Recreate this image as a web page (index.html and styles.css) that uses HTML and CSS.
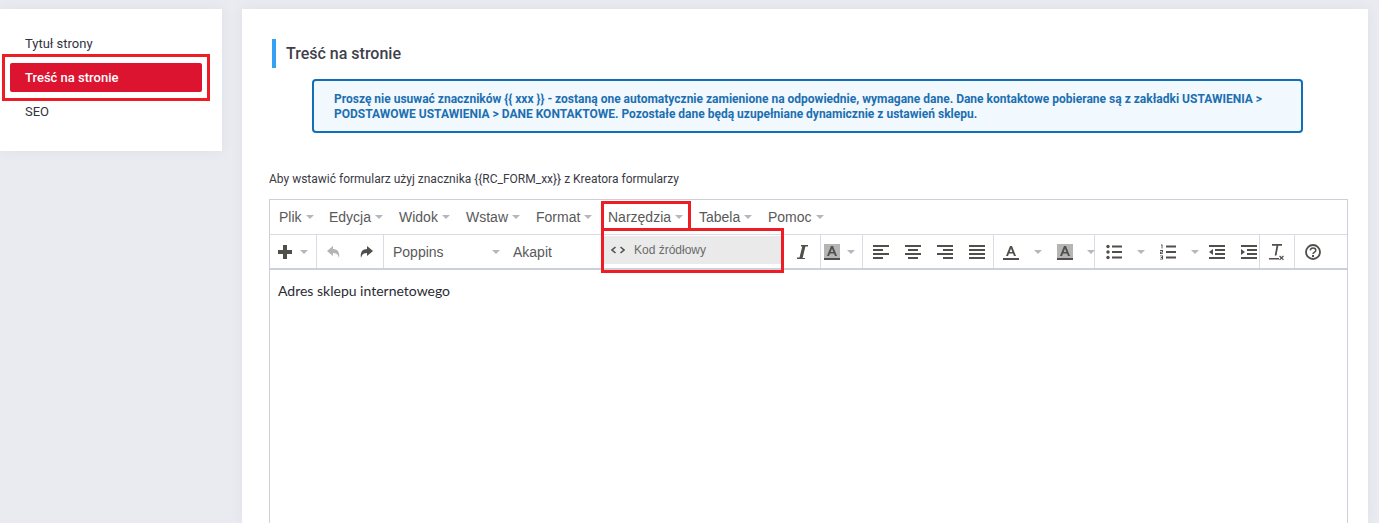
FILE: index.html
```html
<!DOCTYPE html>
<html lang="pl">
<head>
<meta charset="utf-8">
<title>Treść na stronie</title>
<link rel="stylesheet" href="styles.css">
</head>
<body>
<svg class="sprites" width="0" height="0" aria-hidden="true">
  <symbol id="i-caret" viewBox="0 0 10 5"><path d="M0 0h10L5 5z"/></symbol>
</svg>
<div class="page">
  <aside class="side">
    <nav class="side-nav">
      <a class="side-link">Tytuł strony</a>
      <a class="side-link active">Treść na stronie</a>
      <a class="side-link">SEO</a>
    </nav>
    <span class="mark mark-side"></span>
  </aside>
  <main class="panel">
    <h2 class="title">Treść na stronie</h2>
    <div class="alert">Proszę nie usuwać znaczników {{ xxx }} - zostaną one automatycznie zamienione na odpowiednie, wymagane dane. Dane kontaktowe pobierane są z zakładki USTAWIENIA &gt; PODSTAWOWE USTAWIENIA &gt; DANE KONTAKTOWE. Pozostałe dane będą uzupełniane dynamicznie z ustawień sklepu.</div>
    <p class="hint">Aby wstawić formularz użyj znacznika {{RC_FORM_xx}} z Kreatora formularzy</p>
    <div class="editor">
      <div class="menubar">
        <span class="menu m-plik">Plik<svg class="caret"><use href="#i-caret"/></svg></span>
        <span class="menu m-edycja">Edycja<svg class="caret"><use href="#i-caret"/></svg></span>
        <span class="menu m-widok">Widok<svg class="caret"><use href="#i-caret"/></svg></span>
        <span class="menu m-wstaw">Wstaw<svg class="caret"><use href="#i-caret"/></svg></span>
        <span class="menu m-format">Format<svg class="caret"><use href="#i-caret"/></svg></span>
        <span class="menu m-narz">Narzędzia<svg class="caret"><use href="#i-caret"/></svg></span>
        <span class="menu m-tabela">Tabela<svg class="caret"><use href="#i-caret"/></svg></span>
        <span class="menu">Pomoc<svg class="caret"><use href="#i-caret"/></svg></span>
      </div>
      <div class="toolbar">
        <div class="group g-insert">
          <span class="btn w-plus"><svg width="16" height="16" viewBox="0 0 16 16"><path class="ink" d="M6 1h4v5h5v4h-5v5H6v-5H1V6h5z"/></svg></span>
          <svg class="caret"><use href="#i-caret"/></svg>
        </div>
        <div class="group g-hist">
          <span class="btn"><svg width="16" height="16" viewBox="0 0 16 16"><path class="ink-off" d="M7 2 1 7l6 5V9c3 0 5 1 6 5 1-5-1-9-6-9z"/></svg></span>
          <span class="btn"><svg width="16" height="16" viewBox="0 0 16 16"><path class="ink" d="M9 2l6 5-6 5V9c-3 0-5 1-6 5-1-5 1-9 6-9z"/></svg></span>
        </div>
        <div class="group g-select">
          <span class="select s-font">Poppins<svg class="caret"><use href="#i-caret"/></svg></span>
          <span class="select s-block">Akapit</span>
        </div>
        <div class="group g-format">
          <span class="btn"><svg width="16" height="16" viewBox="0 0 16 16"><path class="ink" d="M7 1h7v1.6h-2.6L8.6 14H11v1H3v-1.600h2.500L8.300 2.600H7z"/></svg></span>
          <span class="btn w-tight"><svg width="16" height="16" viewBox="0 0 16 16"><path class="bar-bg" d="M0 0h16v14H0z"/><path class="ink" d="M0 14h16v2H0zM7 2h2l4 10h-2l-1-2.500H6L5 12H3zM6.700 8h2.600L8 4.500z"/></svg></span>
          <svg class="caret c-fmt"><use href="#i-caret"/></svg>
        </div>
        <div class="group g-align">
          <span class="btn"><svg width="16" height="14" viewBox="0 0 16 14"><path class="ink" d="M0 0h16v2H0zM0 4h10v2H0zM0 8h16v2H0zM0 12h10v2H0z"/></svg></span>
          <span class="btn"><svg width="16" height="14" viewBox="0 0 16 14"><path class="ink" d="M0 0h16v2H0zM3 4h10v2H3zM0 8h16v2H0zM3 12h10v2H3z"/></svg></span>
          <span class="btn"><svg width="16" height="14" viewBox="0 0 16 14"><path class="ink" d="M0 0h16v2H0zM6 4h10v2H6zM0 8h16v2H0zM6 12h10v2H6z"/></svg></span>
          <span class="btn"><svg width="16" height="14" viewBox="0 0 16 14"><path class="ink" d="M0 0h16v2H0zM0 4h16v2H0zM0 8h16v2H0zM0 12h16v2H0z"/></svg></span>
        </div>
        <div class="group g-color">
          <span class="btn w-color"><svg width="16" height="16" viewBox="0 0 16 16"><path class="ink" d="M0 14h16v2H0zM7 2h2l4 10h-2l-1-2.500H6L5 12H3zM6.700 8h2.600L8 4.500z"/></svg></span>
          <svg class="caret c-color1"><use href="#i-caret"/></svg>
          <span class="btn w-color2"><svg width="16" height="16" viewBox="0 0 16 16"><path class="bar-bg" d="M0 0h16v14H0z"/><path class="ink" d="M0 14h16v2H0zM7 2h2l4 10h-2l-1-2.500H6L5 12H3zM6.700 8h2.600L8 4.500z"/></svg></span>
          <svg class="caret c-color2"><use href="#i-caret"/></svg>
        </div>
        <div class="group g-list">
          <span class="btn w-list"><svg width="16" height="16" viewBox="0 0 16 16"><circle class="ink" cx="2" cy="2.500" r="1.700"/><circle class="ink" cx="2" cy="8" r="1.700"/><circle class="ink" cx="2" cy="13.500" r="1.700"/><path class="ink" d="M6 1.500h10v2H6zM6 7h10v2H6zM6 12.500h10v2H6z"/></svg></span>
          <svg class="caret c-list"><use href="#i-caret"/></svg>
          <span class="btn w-list2"><svg width="16" height="16" viewBox="0 0 16 16"><path class="ink" d="M6 1.500h10v2H6zM6 7h10v2H6zM6 12.500h10v2H6zM1 .5h1.500v4H1.600V1.500H1zM0 6h3v2.500H1v.7h2V10H0V7.700h2V7H0zM0 11.500h3v4H0v-.8h2v-.8H.8v-.8H2v-.8H0z"/></svg></span>
          <svg class="caret c-list"><use href="#i-caret"/></svg>
          <span class="btn w-ind"><svg width="16" height="14" viewBox="0 0 16 14"><path class="ink" d="M0 0h16v2H0zM6 4h10v2H6zM6 8h10v2H6zM0 12h16v2H0zM4 4v6L0 7z"/></svg></span>
          <span class="btn"><svg width="16" height="14" viewBox="0 0 16 14"><path class="ink" d="M0 0h16v2H0zM6 4h10v2H6zM6 8h10v2H6zM0 12h16v2H0zM0 4v6l4-3z"/></svg></span>
        </div>
        <div class="group g-clear">
          <span class="btn w-clear"><svg width="16" height="18" viewBox="0 0 16 18"><path class="ink" d="M3 1h10v1.800H9.300L7.500 12.500H5.700L7.500 2.800H3zM0 15h10v1.500H0zM11 12.500l1.500 1.600 1.500-1.600.9.800-1.500 1.600 1.500 1.600-.9.800-1.500-1.600-1.500 1.600-.9-.8 1.500-1.600-1.500-1.600z"/></svg></span>
        </div>
        <div class="group g-help">
          <span class="btn"><svg width="16" height="16" viewBox="0 0 16 16"><circle class="ring" cx="8" cy="8" r="7"/><path class="hook" d="M5.300 6.300C5.500 4.700 6.600 4 8 4c1.600 0 2.800.9 2.800 2.300 0 2-2.800 2-2.800 3.700"/><path class="ink" d="M7 11h2v2H7z"/></svg></span>
        </div>
      </div>
      <div class="content">Adres sklepu internetowego</div>
      <div class="dropdown">
        <div class="dd-item">
          <svg width="14" height="8" viewBox="0 0 14 8"><path class="hook" d="M4.500 1 1 4l3.500 3M9.500 1 13 4 9.500 7"/></svg>
          <span>Kod źródłowy</span>
        </div>
      </div>
      <span class="mark mark-menu"></span>
      <span class="mark mark-drop"></span>
    </div>
  </main>
</div>
</body>
</html>
```
FILE: styles.css
```css
* { box-sizing: border-box; }
html, body { margin: 0; height: 100%; }
body {
  background: #e9ebf1;
  font-family: Roboto, "Liberation Sans", sans-serif;
  overflow: hidden;
}
.sprites { position: absolute; }
.page {
  display: flex;
  align-items: flex-start;
  gap: 20px;
  padding: 9px 11px 0 0;
  height: 523px;
}
.side {
  position: relative;
  flex: 0 0 222px;
  height: 142px;
  background: #fff;
  box-shadow: 0 0 12px rgba(60, 70, 110, .06);
}
.side-nav {
  display: flex;
  flex-direction: column;
  gap: 5px;
  padding: 20px 20px 0 10px;
}
.side-link {
  display: block;
  height: 29px;
  line-height: 29px;
  padding-left: 15px;
  font-size: 13px;
  color: #33333f;
  border-radius: 2px;
}
.side-link.active {
  background: #dc1430;
  color: #fff;
  font-weight: 500;
}
.mark {
  position: absolute;
  border: 3px solid #ee1c25;
  pointer-events: none;
}
.mark-side { left: 2px; top: 45px; width: 208px; height: 47px; }
.panel {
  flex: 1;
  height: 514px;
  background: #fff;
  padding: 30px 19px 0 27px;
  box-shadow: 0 0 12px rgba(60, 70, 110, .06);
  overflow: hidden;
}
.title {
  margin: 0;
  height: 29px;
  line-height: 29px;
  padding-left: 10px;
  border-left: 4px solid #35a1f4;
  margin-left: 3px;
  font-size: 16px;
  font-weight: 500;
  color: #3f3f4c;
}
.alert {
  margin: 11px 0 0 43px;
  width: 991px;
  height: 54px;
  padding: 11px 20px 0;
  border: 2px solid #126fb5;
  border-radius: 4px;
  background: #f1f8fe;
  color: #1c6fb0;
  font-size: 12px;
  font-weight: 700;
  line-height: 15px;
}
.hint {
  margin: 39px 0 0;
  height: 15px;
  line-height: 15px;
  font-size: 12px;
  color: #3a3a44;
}
.editor {
  position: relative;
  margin-top: 12px;
  width: 1079px;
  height: 330px;
  border: 1px solid #ccd0d8;
  font-family: "Liberation Sans", Arial, sans-serif;
  color: #595959;
}
.menubar {
  display: flex;
  align-items: center;
  height: 35px;
  padding-left: 9px;
  border-bottom: 1px solid #d9dce2;
  font-size: 14px;
}
.menu { display: inline-flex; align-items: center; white-space: nowrap; }
.m-plik { width: 50px; }
.m-edycja { width: 70px; }
.m-widok { width: 67px; }
.m-wstaw { width: 70px; }
.m-format { width: 72px; }
.m-narz { width: 91px; }
.m-tabela { width: 69px; }
.caret {
  width: 8px;
  height: 4px;
  margin-left: 4px;
  fill: #b5b7bb;
  flex: none;
}
.toolbar {
  display: flex;
  height: 35px;
  border-bottom: 2px solid #ccd0d8;
}
.group {
  display: flex;
  align-items: center;
  height: 100%;
  border-right: 1px solid #d9dce2;
  flex: none;
}
.group .caret { margin-left: 0; }
.btn {
  display: flex;
  align-items: center;
  justify-content: center;
  width: 32px;
  height: 100%;
  flex: none;
}
.ink { fill: #514f4c; }
.ink-off { fill: #b5b4b2; }
.bar-bg { fill: #b5b5b5; }
.ring, .hook { fill: none; stroke: #514f4c; stroke-width: 1.800; }
.hook { stroke-width: 1.500; }
.g-insert { width: 47px; padding-left: 0; }
.w-plus { width: 30px; }
.g-insert .caret { margin-left: 0; }
.g-hist { width: 67px; padding-left: 1px; }
.g-select { width: 479px; font-size: 14px; }
.select { display: flex; align-items: center; white-space: nowrap; }
.s-font { width: 129px; padding-left: 9px; justify-content: space-between; padding-right: 13px; }
.g-format { justify-content: flex-end; width: 0; border-right: 0; }
.g-select { width: 437px; }
.g-format { width: 42px; }
.g-format { width: 0; }
.g-format, .g-select { position: relative; }
.g-format { flex: 0 0 42px; overflow: visible; border-right: 1px solid #d9dce2; padding-right: 7px; margin-left: 0; }
.g-format .btn { width: 30px; margin-left: -30px; }
.g-format .btn.w-tight { margin-left: 0; margin-right: 0; }
.c-fmt { margin-left: 4px; }
.g-align { width: 131px; padding-left: 2px; }
.g-color { width: 101px; padding-left: 8px; }
.w-color { width: 17px; }
.c-color1 { margin-left: 15px !important; }
.w-color2 { width: 17px; margin-left: 14px; }
.c-color2 { margin-left: 14px !important; }
.g-list { width: 165px; padding-left: 10px; }
.w-list { width: 17px; }
.c-list { margin-left: 15px !important; }
.w-list2 { width: 17px; margin-left: 14px; }
.w-ind { margin-left: 2px; }
.g-clear { width: 35px; justify-content: center; }
.w-clear { width: 18px; }
.g-help { width: 35px; border-right: 0; justify-content: center; }
.content {
  padding: 12px 8px;
  font-family: Lato, "Noto Sans", sans-serif;
  font-size: 14px;
  line-height: 17px;
  color: #2b2b33;
}
.dropdown {
  position: absolute;
  left: 334px;
  top: 36px;
  width: 177px;
  height: 29px;
  background: #fff;
}
.dd-item {
  display: flex;
  align-items: center;
  gap: 9px;
  height: 28px;
  padding-left: 7px;
  background: #eaeaea;
  font-size: 12px;
  color: #6a6a6a;
}
.mark-menu { left: 331px; top: 1px; width: 90px; height: 30px; }
.mark-drop { left: 331px; top: 28px; width: 183px; height: 45px; }
```
